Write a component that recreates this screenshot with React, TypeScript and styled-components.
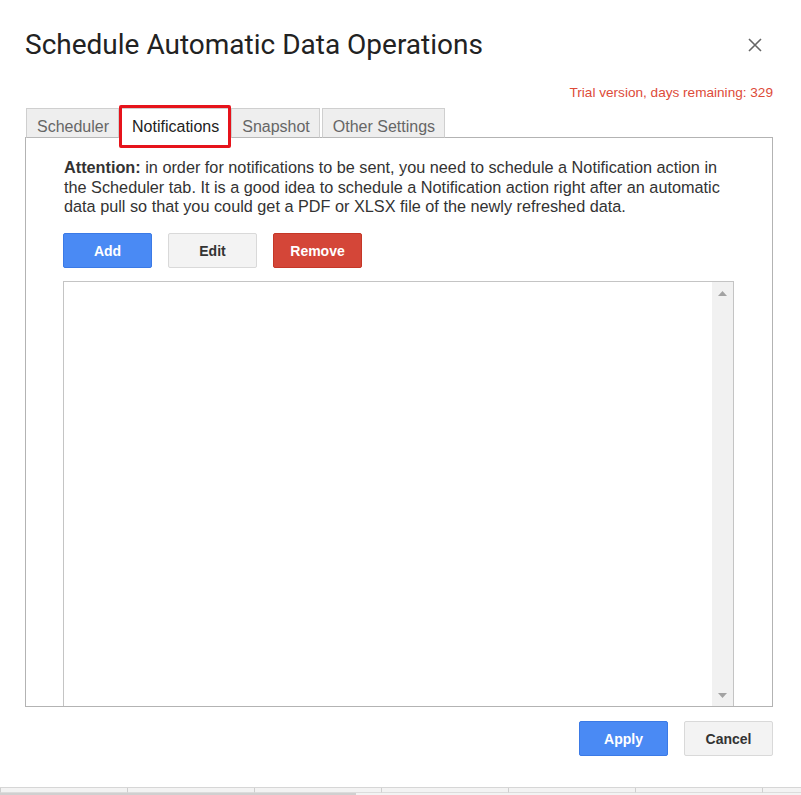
import styled, { createGlobalStyle } from 'styled-components'

const GlobalStyle = createGlobalStyle`
  html, body {
    margin: 0;
    padding: 0;
    background: #ffffff;
  }
  body {
    font-family: "Liberation Sans", Arial, sans-serif;
    color: #333333;
  }
`

const tabs = ['Scheduler', 'Notifications', 'Snapshot', 'Other Settings']
const sheetColumns = [0, 1, 2, 3, 4, 5, 6]

function App () {
  return (
    <Page>
      <GlobalStyle />
      <Dialog>
        <Header>
          <Title>Schedule Automatic Data Operations</Title>
          <CloseButton aria-label="Close">
            <svg width="14" height="14" viewBox="0 0 14 14">
              <path d="M1 1 L13 13 M13 1 L1 13" stroke="#666" strokeWidth="1.6" fill="none" />
            </svg>
          </CloseButton>
        </Header>

        <TrialRow>Trial version, days remaining: 329</TrialRow>

        <TabBar>
          {tabs.map(t => (
            <Tab key={t} $active={t === 'Notifications'}>{t}</Tab>
          ))}
        </TabBar>

        <Panel>
          <Attention>
            <strong>Attention:</strong> in order for notifications to be sent, you need to schedule a Notification action in<br />
            the Scheduler tab. It is a good idea to schedule a Notification action right after an automatic<br />
            data pull so that you could get a PDF or XLSX file of the newly refreshed data.
          </Attention>

          <ButtonRow>
            <ActionButton $variant="blue">Add</ActionButton>
            <ActionButton $variant="plain">Edit</ActionButton>
            <ActionButton $variant="red">Remove</ActionButton>
          </ButtonRow>

          <ListBox>
            <ListArea />
            <ScrollTrack>
              <svg width="9" height="5" viewBox="0 0 9 5">
                <path d="M0 5 L4.5 0 L9 5 Z" fill="#a3a3a3" />
              </svg>
              <svg width="9" height="5" viewBox="0 0 9 5">
                <path d="M0 0 L4.5 5 L9 0 Z" fill="#a3a3a3" />
              </svg>
            </ScrollTrack>
          </ListBox>
        </Panel>

        <Footer>
          <ActionButton $variant="blue">Apply</ActionButton>
          <ActionButton $variant="plain">Cancel</ActionButton>
        </Footer>
      </Dialog>

      <SheetStrip>
        {sheetColumns.map(c => <SheetCell key={c} />)}
        <SheetThumb />
      </SheetStrip>
    </Page>
  )
}

const Page = styled.div`
  width: 801px;
  height: 795px;
  display: flex;
  flex-direction: column;
  overflow: hidden;
`

const Dialog = styled.div`
  flex: 1;
  display: flex;
  flex-direction: column;
  padding: 27px 28px 0 25px;
`

const Header = styled.div`
  display: flex;
  align-items: center;
  justify-content: space-between;
  height: 36px;
`

const Title = styled.h1`
  margin: 0;
  font-family: Roboto, "Liberation Sans", sans-serif;
  font-weight: 400;
  font-size: 28px;
  line-height: 36px;
  color: #222222;
  white-space: nowrap;
`

const CloseButton = styled.div`
  width: 14px;
  height: 14px;
  margin-right: 11px;
  display: flex;
`

const TrialRow = styled.div`
  margin-top: 20px;
  text-align: right;
  font-size: 13.6px;
  line-height: 20px;
  color: #dd4b39;
`

const TabBar = styled.div`
  margin-top: 5px;
  display: flex;
  gap: 2px;
  padding-left: 1px;
  position: relative;
  z-index: 1;
  margin-bottom: -1px;
`

const Tab = styled.div<{ $active?: boolean }>`
  position: relative;
  box-sizing: border-box;
  height: 30px;
  padding: 9px 9px 0 10px;
  font-size: 16px;
  line-height: 18px;
  color: ${p => (p.$active ? '#222222' : '#666666')};
  background: ${p => (p.$active ? '#ffffff' : '#eeeeee')};
  border: 1px solid #cfcfcf;
  border-bottom: 1px solid ${p => (p.$active ? '#ffffff' : '#b8b8b8')};
  white-space: nowrap;

  ${p => p.$active && `
    &::after {
      content: '';
      position: absolute;
      left: -3px;
      right: -3px;
      top: -4px;
      bottom: -11px;
      border: 3px solid #e6131b;
      border-radius: 2px;
    }
  `}
`

const Panel = styled.div`
  height: 570px;
  box-sizing: border-box;
  border: 1px solid #b3b3b3;
  padding: 20px 38px 0 37px;
  display: flex;
  flex-direction: column;
`

const Attention = styled.p`
  margin: 0 0 0 1px;
  font-size: 16.25px;
  line-height: 19.5px;
  color: #333333;
  white-space: nowrap;

  strong {
    font-weight: 700;
  }
`

const ButtonRow = styled.div`
  margin-top: 16.5px;
  display: flex;
  gap: 16px;
`

const variants = {
  blue: { bg: '#4a8af4', border: '#3b7ae6', color: '#ffffff' },
  red: { bg: '#d44638', border: '#c53727', color: '#ffffff' },
  plain: { bg: '#f3f3f3', border: '#d9d9d9', color: '#333333' }
}

const ActionButton = styled.button<{ $variant: keyof typeof variants }>`
  width: 89px;
  height: 35px;
  box-sizing: border-box;
  border-radius: 2px;
  border: 1px solid ${p => variants[p.$variant].border};
  background: ${p => variants[p.$variant].bg};
  color: ${p => variants[p.$variant].color};
  font-family: "Liberation Sans", Arial, sans-serif;
  font-weight: 700;
  font-size: 14px;
  padding: 0;
`

const ListBox = styled.div`
  margin-top: 13px;
  flex: 1;
  display: flex;
  border: 1px solid #c4c4c4;
  border-bottom: none;
`

const ListArea = styled.div`
  flex: 1;
  background: #ffffff;
`

const ScrollTrack = styled.div`
  width: 21px;
  background: #f1f1f1;
  display: flex;
  flex-direction: column;
  align-items: center;
  justify-content: space-between;
  padding: 9px 0 8px;
`

const Footer = styled.div`
  margin-top: 14px;
  display: flex;
  justify-content: flex-end;
  gap: 16px;
`

const SheetStrip = styled.div`
  position: relative;
  height: 7px;
  display: flex;
  background: #f3f3f3;
  border-top: 1px solid #d6d6d6;
`

const SheetCell = styled.div`
  width: 126px;
  flex-shrink: 0;
  border-left: 1px solid #cfcfcf;
  border-bottom: 1px solid #dcdcdc;
  height: 4px;
`

const SheetThumb = styled.div`
  position: absolute;
  left: 0;
  bottom: 0;
  width: 356px;
  height: 2px;
  background: #d0d0d0;
`

export default App
